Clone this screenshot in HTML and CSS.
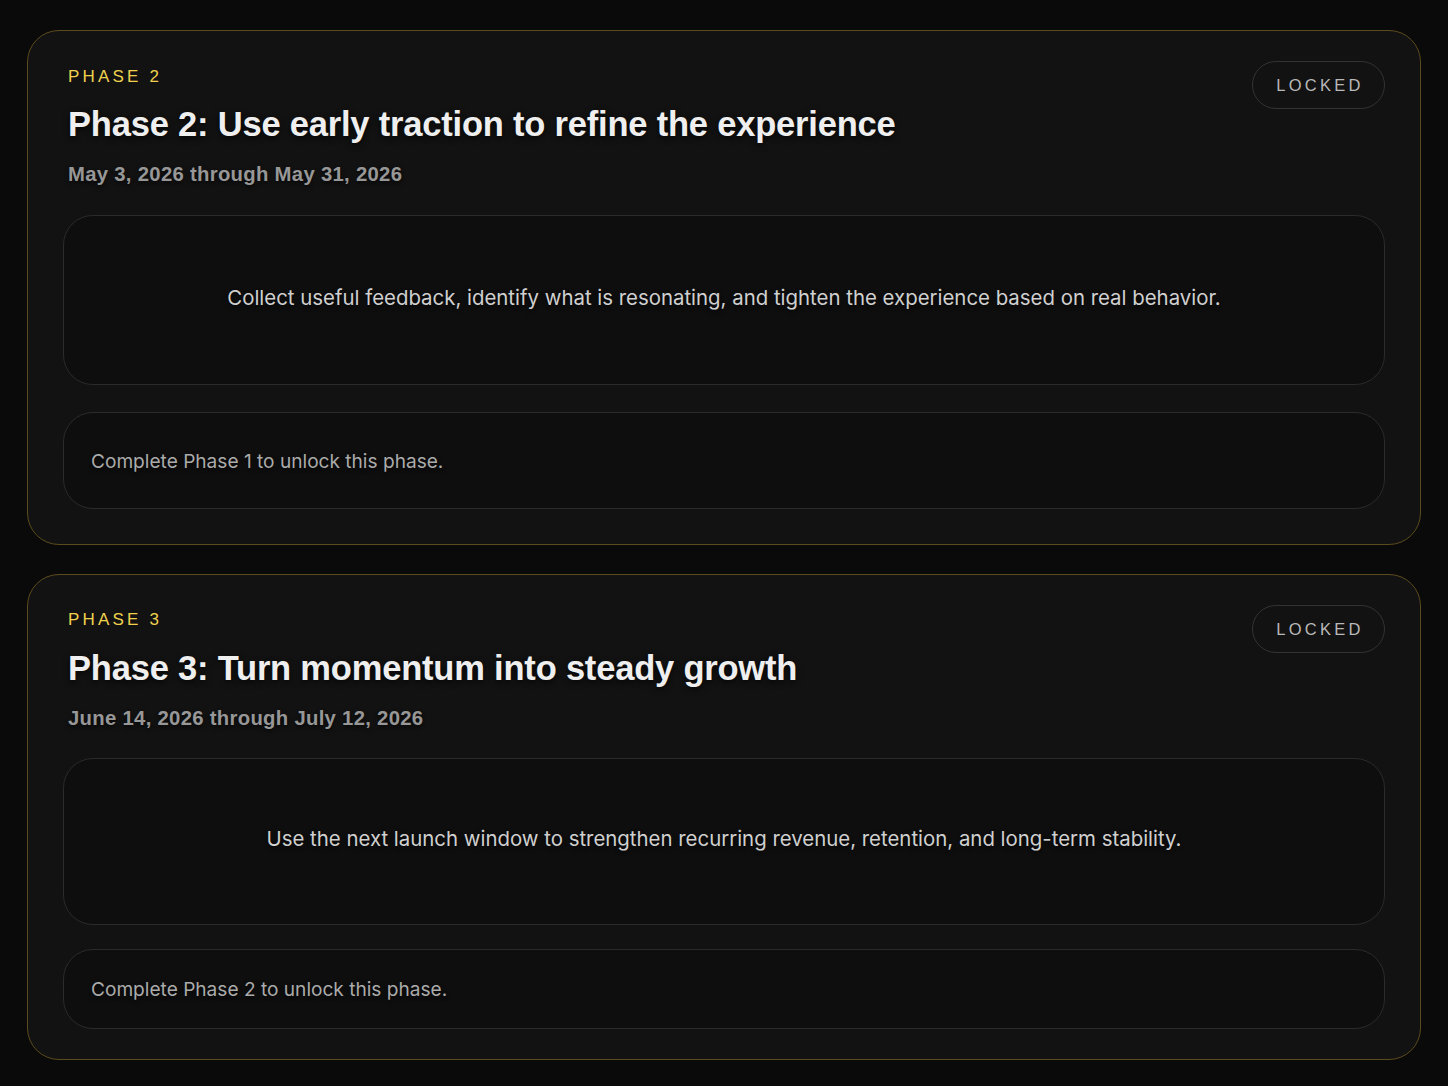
FILE: index.html
```html
<!DOCTYPE html>
<html lang="en">
<head>
<meta charset="utf-8">
<title>Phases</title>
<link rel="stylesheet" href="styles.css">
</head>
<body>
<main class="phases">
  <section class="card">
    <header class="card-head">
      <div class="head-text">
        <div class="eyebrow">PHASE 2</div>
        <h2 class="title">Phase 2: Use early traction to refine the experience</h2>
        <div class="dates">May 3, 2026 through May 31, 2026</div>
      </div>
      <span class="badge">LOCKED</span>
    </header>
    <div class="summary">Collect useful feedback, identify what is resonating, and tighten the experience based on real behavior.</div>
    <div class="notice">Complete Phase 1 to unlock this phase.</div>
  </section>
  <section class="card card-b">
    <header class="card-head">
      <div class="head-text">
        <div class="eyebrow">PHASE 3</div>
        <h2 class="title">Phase 3: Turn momentum into steady growth</h2>
        <div class="dates">June 14, 2026 through July 12, 2026</div>
      </div>
      <span class="badge">LOCKED</span>
    </header>
    <div class="summary">Use the next launch window to strengthen recurring revenue, retention, and long-term stability.</div>
    <div class="notice">Complete Phase 2 to unlock this phase.</div>
  </section>
</main>
</body>
</html>
```
FILE: styles.css
```css
* { box-sizing: border-box; }
html, body { margin: 0; padding: 0; }
body {
  background: #0a0a0a;
  font-family: "Liberation Sans", Arial, sans-serif;
  min-height: 1086px;
}
.phases {
  display: flex;
  flex-direction: column;
  gap: 29px;
  padding: 30px 27px 26px 27px;
}
.card {
  background: #121212;
  border: 1px solid #5c4b1c;
  border-radius: 32px;
  padding: 31px 35px 35px 35px;
  display: flex;
  flex-direction: column;
}
.card-head {
  display: flex;
  justify-content: space-between;
  align-items: flex-start;
  padding: 0 0 0 5px;
}
.head-text { display: flex; flex-direction: column; }
.eyebrow {
  color: #efd14e;
  font-size: 17px;
  letter-spacing: 3.2px;
  line-height: 28px;
  padding-top: 1px;
}
.title {
  margin: 13px 0 0 0;
  color: #efefef;
  font-size: 34.5px;
  font-weight: 700;
  line-height: 40px;
  letter-spacing: -0.2px;
  text-shadow: 0 2px 6px rgba(0,0,0,0.8);
}
.dates {
  margin-top: 18px;
  color: #979797;
  font-weight: 700;
  font-size: 20.3px;
  line-height: 24px;
  letter-spacing: 0.3px;
  text-shadow: 0 2px 4px rgba(0,0,0,0.7);
}
.badge {
  margin-top: -1px;
  margin-right: 0;
  height: 48px;
  width: 133px;
  border: 1px solid #333;
  border-radius: 25px;
  display: flex;
  align-items: center;
  justify-content: center;
  color: #b9b9b9;
  font-size: 16.5px;
  letter-spacing: 3.3px;
  padding-left: 3px;
  background: #121212;
}
.summary {
  margin-top: 29px;
  height: 170px;
  background: #0e0e0e;
  border: 1px solid #2b2b2b;
  border-radius: 30px;
  display: flex;
  align-items: center;
  justify-content: center;
  color: #d0d0d0;
  font-family: Inter, "Liberation Sans", sans-serif;
  font-size: 20.4px;
  padding-bottom: 6px;
  text-shadow: 0 2px 4px rgba(0,0,0,0.7);
}
.notice {
  margin-top: 27px;
  height: 97px;
  background: #0e0e0e;
  border: 1px solid #2b2b2b;
  border-radius: 30px;
  display: flex;
  align-items: center;
  padding: 0 0 0 27px;
  color: #ababab;
  font-family: Inter, "Liberation Sans", sans-serif;
  font-size: 19.1px;
  text-shadow: 0 2px 4px rgba(0,0,0,0.7);
}
.card-b { padding-bottom: 30px; }
.card-b .eyebrow { padding-top: 0; }
.card-b .title { margin-top: 14px; }
.card-b .summary { height: 167px; margin-top: 28px; }
.card-b .notice { height: 80px; margin-top: 24px; }
```
